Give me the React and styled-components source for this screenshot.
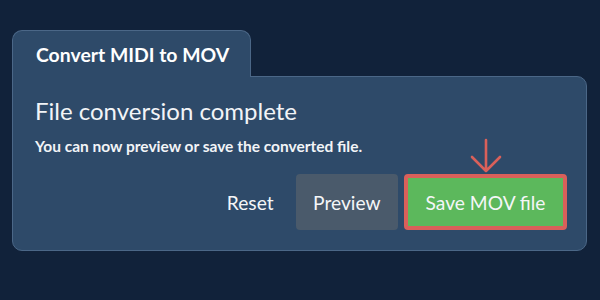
import React from "react";
import styled, { createGlobalStyle } from "styled-components";

const GlobalStyle = createGlobalStyle`
  html, body {
    margin: 0;
    padding: 0;
    background: #11223a;
    font-family: Lato, "Noto Sans", sans-serif;
  }
`;

const Page = styled.div`
  width: 600px;
  height: 300px;
  box-sizing: border-box;
  padding: 30px 0 0 12px;
`;

const Tab = styled.div`
  position: relative;
  z-index: 1;
  width: 239px;
  height: 47px;
  box-sizing: border-box;
  margin-bottom: -1px;
  padding: 12px 0 0 23px;
  background: #2e4a69;
  border: 1px solid #4b6787;
  border-bottom: none;
  border-radius: 10px 10px 0 0;
  color: #ffffff;
  font-size: 19.4px;
  font-weight: 700;
`;

const Panel = styled.div`
  width: 575px;
  height: 175px;
  box-sizing: border-box;
  padding: 19px 19px 0 22px;
  background: #2e4a69;
  border: 1px solid #4b6787;
  border-radius: 0 10px 10px 10px;
  color: #f2f4f7;
`;

const Heading = styled.h2`
  margin: 0;
  font-size: 24px;
  font-weight: 400;
  line-height: 30px;
`;

const Note = styled.p`
  margin: 10px 0 0;
  font-size: 15.5px;
  font-weight: 700;
  line-height: 20px;
`;

const Actions = styled.div`
  display: flex;
  justify-content: flex-end;
  align-items: center;
  gap: 6px;
  margin-top: 18px;
`;

const Button = styled.button`
  position: relative;
  height: 56px;
  box-sizing: border-box;
  padding: 0 ${(p) => p.$pad}px;
  border: ${(p) => (p.$outline ? "4px solid #d9605a" : "none")};
  border-radius: 4px;
  background: ${(p) => p.$bg};
  color: #f4f6f8;
  font-family: inherit;
  font-size: 19.2px;
  font-weight: 400;
  cursor: pointer;
`;

const Arrow = styled.svg`
  position: absolute;
  left: 50%;
  top: -40px;
  transform: translateX(-50%);
`;

export default function App() {
  return (
    <>
      <GlobalStyle />
      <Page>
        <Tab>Convert MIDI to MOV</Tab>
        <Panel>
          <Heading>File conversion complete</Heading>
          <Note>You can now preview or save the converted file.</Note>
          <Actions>
            <Button $bg="transparent" $pad={16}>Reset</Button>
            <Button $bg="#4a5a6b" $pad={17.5}>Preview</Button>
            <Button $bg="#5cb85c" $pad={17.5} $outline>
              Save MOV file
              <Arrow width="32" height="36" viewBox="0 0 32 36">
                <path
                  d="M16 2 V33 M2 19 L16 33 L30 19"
                  fill="none"
                  stroke="#d9605a"
                  strokeWidth="2.6"
                  strokeLinecap="round"
                  strokeLinejoin="round"
                />
              </Arrow>
            </Button>
          </Actions>
        </Panel>
      </Page>
    </>
  );
}
